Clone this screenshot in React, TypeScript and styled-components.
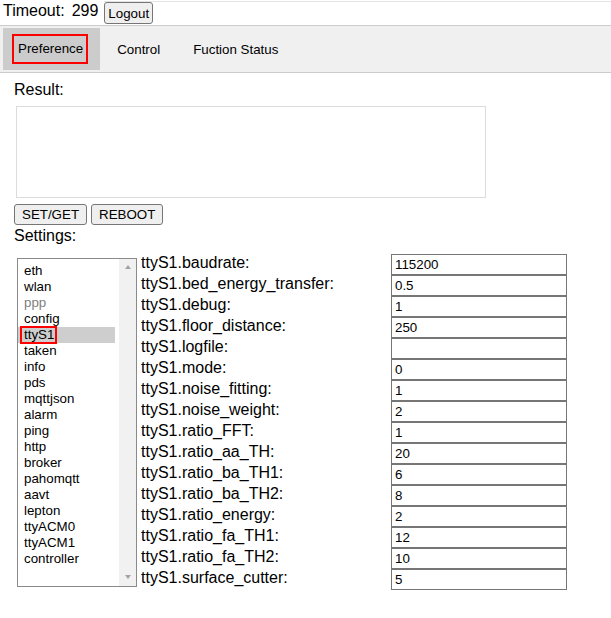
import React from 'react';
import styled, { createGlobalStyle } from 'styled-components';

const GlobalStyle = createGlobalStyle`
  body {
    margin: 0;
    font-family: 'Liberation Sans', Arial, sans-serif;
    font-size: 16px;
    color: #000;
    background: #fff;
  }
`;

const TopBar = styled.div`
  display: flex;
  align-items: flex-start;
  height: 25px;
  padding-left: 3px;
`;

const TimeoutText = styled.span`
  margin-top: 2px;
  line-height: 18px;
  white-space: nowrap;
`;

const Count = styled.span`
  margin-left: 7px;
`;

const UserArea = styled.div`
  flex: 1;
  margin: 1px 0 0 6px;
  border-top: 1px solid #e3e3e3;
`;

const SmallButton = styled.button`
  height: 22px;
  padding: 0 3px;
  font-family: 'Liberation Sans', Arial, sans-serif;
  font-size: 13.33px;
  color: #000;
  background: #efefef;
  border: 1px solid #767676;
  border-radius: 3px;
`;

const TabBar = styled.div`
  display: flex;
  padding: 2px 3px;
  background: #f0f0f0;
  border-top: 1px solid #ccc;
  border-bottom: 1px solid #ccc;
`;

const Tab = styled.div<{ $active?: boolean }>`
  display: flex;
  align-items: center;
  height: 42px;
  padding: 0 16px 0 17px;
  font-size: 13.33px;
  background: ${(props) => (props.$active ? '#ccc' : 'transparent')};
`;

const FocusLabel = styled.span`
  display: inline-block;
  line-height: 16px;
  padding: 5px 3px 5px 4px;
  margin: 0 -4px 0 -8px;
  border: 2px solid #f00;
`;

const Content = styled.div`
  padding: 8px 0 0 14px;
`;

const SectionLabel = styled.div<{ $gap?: number }>`
  line-height: 18px;
  margin-top: ${(props) => props.$gap || 0}px;
`;

const ResultBox = styled.textarea`
  display: block;
  box-sizing: border-box;
  width: 470px;
  height: 92px;
  margin: 7px 0 0 2px;
  border: 1px solid #dcdcdc;
  resize: none;
  outline: none;
`;

const ButtonRow = styled.div`
  display: flex;
  gap: 4px;
  margin-top: 6px;
`;

const ActionButton = styled.button`
  height: 21px;
  padding: 0 7px;
  font-family: 'Liberation Sans', Arial, sans-serif;
  font-size: 13.33px;
  color: #000;
  background: #efefef;
  border: 1px solid #767676;
  border-radius: 3px;
`;

const SettingsRow = styled.div`
  display: flex;
  align-items: center;
  margin-top: 9px;
`;

const ListBox = styled.div`
  display: flex;
  box-sizing: border-box;
  width: 120px;
  height: 329px;
  margin-left: 3px;
  border: 1px solid #8a8a8a;
`;

const Options = styled.div`
  flex: 1;
  padding: 4px 4px 0 0;
`;

const Option = styled.div<{ $selected?: boolean; $disabled?: boolean }>`
  height: 16px;
  line-height: 16px;
  padding-left: 6px;
  font-size: 13.33px;
  white-space: nowrap;
  color: ${(props) => (props.$disabled ? '#808080' : '#000')};
  background: ${(props) => (props.$selected ? '#cecece' : 'transparent')};
`;

const SelectedLabel = styled.span`
  display: inline-block;
  box-sizing: border-box;
  height: 18px;
  line-height: 14px;
  margin: -1px 0 0 -4px;
  padding: 0 1px 0 2px;
  border: 2px solid #f00;
  vertical-align: top;
`;

const Scrollbar = styled.div`
  display: flex;
  flex-direction: column;
  justify-content: space-between;
  align-items: center;
  width: 17px;
  padding: 6px 0 7px;
  background: #f1f1f1;
`;

const Arrow = styled.div<{ $down?: boolean }>`
  width: 0;
  height: 0;
  border-left: 3.5px solid transparent;
  border-right: 3.5px solid transparent;
  ${(props) =>
    props.$down
      ? 'border-top: 4px solid #a3a3a3;'
      : 'border-bottom: 4px solid #a3a3a3;'}
`;

const FieldGrid = styled.div`
  display: grid;
  grid-template-columns: 250px 176px;
  grid-auto-rows: 21px;
  margin-left: 4px;
`;

const FieldLabel = styled.label`
  line-height: 18px;
  white-space: nowrap;
`;

const FieldInput = styled.input`
  box-sizing: border-box;
  width: 176px;
  height: 21px;
  padding: 0 3px;
  font-family: 'Liberation Sans', Arial, sans-serif;
  font-size: 13.33px;
  color: #000;
  border: 1px solid #767676;
  outline: none;
`;

const groups = [
  'eth', 'wlan', 'ppp', 'config', 'ttyS1', 'taken', 'info', 'pds', 'mqttjson', 'alarm',
  'ping', 'http', 'broker', 'pahomqtt', 'aavt', 'lepton', 'ttyACM0', 'ttyACM1', 'controller',
];

const fields: [string, string][] = [
  ['baudrate', '115200'],
  ['bed_energy_transfer', '0.5'],
  ['debug', '1'],
  ['floor_distance', '250'],
  ['logfile', ''],
  ['mode', '0'],
  ['noise_fitting', '1'],
  ['noise_weight', '2'],
  ['ratio_FFT', '1'],
  ['ratio_aa_TH', '20'],
  ['ratio_ba_TH1', '6'],
  ['ratio_ba_TH2', '8'],
  ['ratio_energy', '2'],
  ['ratio_fa_TH1', '12'],
  ['ratio_fa_TH2', '10'],
  ['surface_cutter', '5'],
];

const App = () => {
  const selected = 'ttyS1';
  return (
    <>
      <GlobalStyle />
      <TopBar>
        <TimeoutText>
          Timeout:<Count>299</Count>
        </TimeoutText>
        <UserArea>
          <SmallButton>Logout</SmallButton>
        </UserArea>
      </TopBar>
      <TabBar>
        <Tab $active>
          <FocusLabel>Preference</FocusLabel>
        </Tab>
        <Tab>Control</Tab>
        <Tab>Fuction Status</Tab>
      </TabBar>
      <Content>
        <SectionLabel>Result:</SectionLabel>
        <ResultBox readOnly />
        <ButtonRow>
          <ActionButton>SET/GET</ActionButton>
          <ActionButton>REBOOT</ActionButton>
        </ButtonRow>
        <SectionLabel $gap={2}>Settings:</SectionLabel>
        <SettingsRow>
          <ListBox>
            <Options>
              {groups.map((g) => (
                <Option key={g} $selected={g === selected} $disabled={g === 'ppp'}>
                  {g === selected ? <SelectedLabel>{g}</SelectedLabel> : g}
                </Option>
              ))}
            </Options>
            <Scrollbar>
              <Arrow />
              <Arrow $down />
            </Scrollbar>
          </ListBox>
          <FieldGrid>
            {fields.map(([name, value]) => (
              <React.Fragment key={name}>
                <FieldLabel>{`${selected}.${name}:`}</FieldLabel>
                <FieldInput defaultValue={value} />
              </React.Fragment>
            ))}
          </FieldGrid>
        </SettingsRow>
      </Content>
    </>
  );
};

export default App;
